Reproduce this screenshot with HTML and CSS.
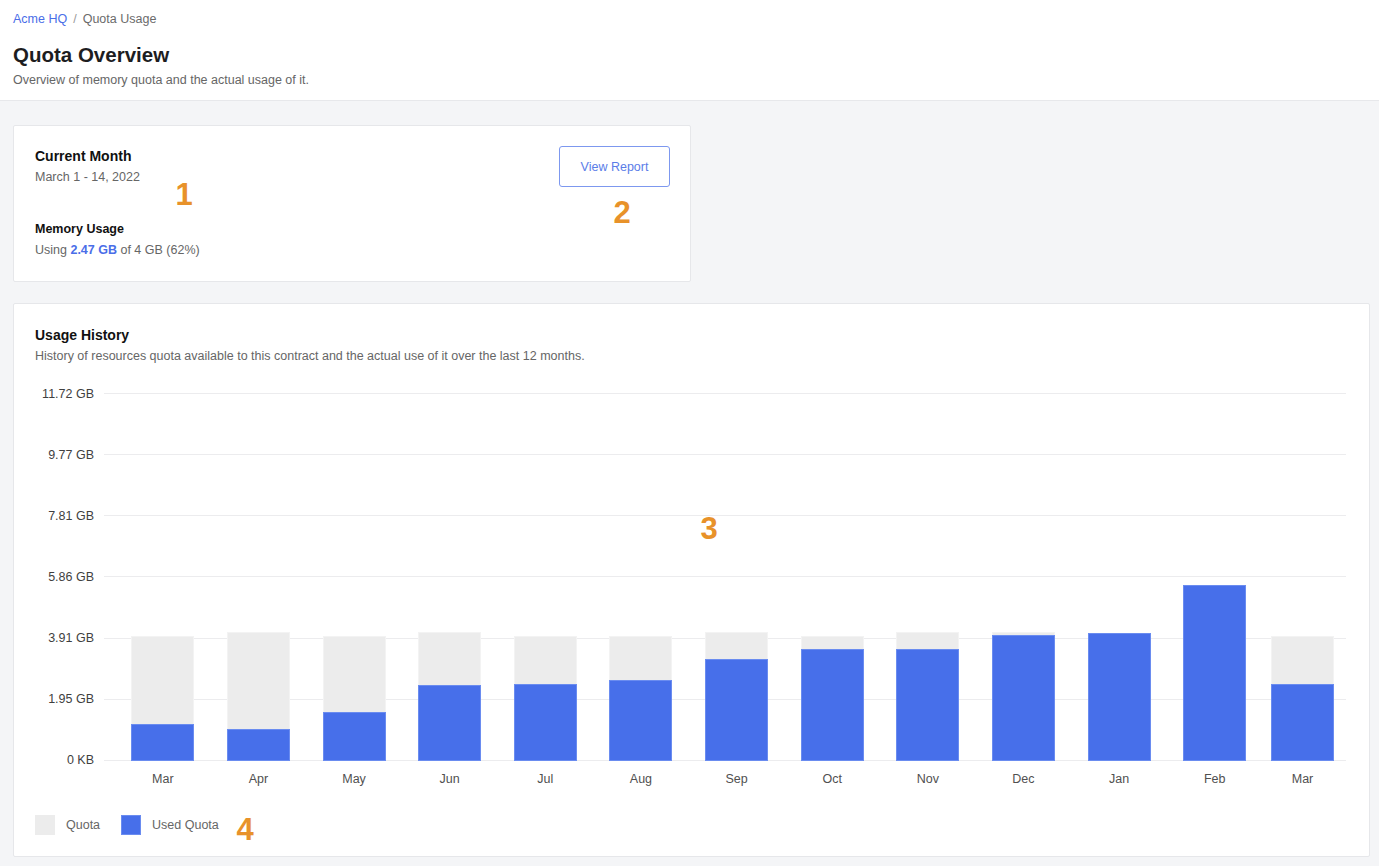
FILE: index.html
```html
<!DOCTYPE html>
<html lang="en">
<head>
<meta charset="utf-8">
<title>Quota Overview</title>
<link rel="stylesheet" href="styles.css">
</head>
<body>
<header class="page-header">
  <nav class="breadcrumb"><a class="crumb-link" href="#">Acme HQ</a><span class="crumb-sep">/</span><span class="crumb-current">Quota Usage</span></nav>
  <h1 class="page-title">Quota Overview</h1>
  <p class="page-subtitle">Overview of memory quota and the actual usage of it.</p>
</header>
<main class="page-main">
  <section class="card current-card">
    <div class="current-info">
      <h2 class="card-title">Current Month</h2>
      <p class="card-meta">March 1 - 14, 2022</p>
      <h3 class="usage-title">Memory Usage</h3>
      <p class="card-meta">Using <strong class="usage-value">2.47 GB</strong> of 4 GB (62%)</p>
    </div>
    <button class="btn-outline" type="button">View Report</button>
  </section>
  <section class="card history-card">
    <h2 class="card-title">Usage History</h2>
    <p class="card-meta">History of resources quota available to this contract and the actual use of it over the last 12 months.</p>
    <div class="chart">
      <div class="y-axis">
        <div class="y-label">11.72 GB</div>
        <div class="y-label">9.77 GB</div>
        <div class="y-label">7.81 GB</div>
        <div class="y-label">5.86 GB</div>
        <div class="y-label">3.91 GB</div>
        <div class="y-label">1.95 GB</div>
        <div class="y-label">0 KB</div>
      </div>
      <div class="plot">
        <div class="gridlines">
          <div class="gridline"></div><div class="gridline"></div><div class="gridline"></div><div class="gridline"></div><div class="gridline"></div><div class="gridline"></div><div class="gridline"></div>
        </div>
        <div class="bars">
          <div class="bar-col"><div class="bar-quota" style="height:34.0%"></div><div class="bar-used" style="height:10.1%"></div></div>
          <div class="bar-col"><div class="bar-quota" style="height:35.1%"></div><div class="bar-used" style="height:8.7%"></div></div>
          <div class="bar-col"><div class="bar-quota" style="height:34.0%"></div><div class="bar-used" style="height:13.3%"></div></div>
          <div class="bar-col"><div class="bar-quota" style="height:35.1%"></div><div class="bar-used" style="height:20.7%"></div></div>
          <div class="bar-col"><div class="bar-quota" style="height:34.0%"></div><div class="bar-used" style="height:20.9%"></div></div>
          <div class="bar-col"><div class="bar-quota" style="height:34.0%"></div><div class="bar-used" style="height:22.0%"></div></div>
          <div class="bar-col"><div class="bar-quota" style="height:35.1%"></div><div class="bar-used" style="height:27.7%"></div></div>
          <div class="bar-col"><div class="bar-quota" style="height:34.0%"></div><div class="bar-used" style="height:30.4%"></div></div>
          <div class="bar-col"><div class="bar-quota" style="height:35.1%"></div><div class="bar-used" style="height:30.4%"></div></div>
          <div class="bar-col"><div class="bar-quota" style="height:35.1%"></div><div class="bar-used" style="height:34.3%"></div></div>
          <div class="bar-col"><div class="bar-quota" style="height:34.0%"></div><div class="bar-used" style="height:34.8%"></div></div>
          <div class="bar-col"><div class="bar-quota" style="height:34.0%"></div><div class="bar-used" style="height:47.8%"></div></div>
          <div class="bar-col"><div class="bar-quota" style="height:34.0%"></div><div class="bar-used" style="height:20.9%"></div></div>
        </div>
      </div>
      <div class="x-axis">
        <span>Mar</span><span>Apr</span><span>May</span><span>Jun</span><span>Jul</span><span>Aug</span><span>Sep</span><span>Oct</span><span>Nov</span><span>Dec</span><span>Jan</span><span>Feb</span><span>Mar</span>
      </div>
    </div>
    <div class="legend">
      <div class="legend-item"><span class="swatch swatch-quota"></span><span>Quota</span></div>
      <div class="legend-item"><span class="swatch swatch-used"></span><span>Used Quota</span></div>
    </div>
  </section>
</main>
<div class="marker marker-1">1</div>
<div class="marker marker-2">2</div>
<div class="marker marker-3">3</div>
<div class="marker marker-4">4</div>
</body>
</html>
```

FILE: styles.css
```css
* { box-sizing: border-box; }

html, body {
  margin: 0;
  padding: 0;
}

body {
  position: relative;
  min-height: 866px;
  background: #f4f5f7;
  font-family: "Liberation Sans", Arial, Helvetica, sans-serif;
  color: #1f1f1f;
}

.page-header {
  background: #ffffff;
  border-bottom: 1px solid #e7e8eb;
  padding: 10px 13px 11px;
}

.breadcrumb {
  font-size: 12.5px;
  line-height: 18px;
  color: #6b6b6b;
}

.crumb-link {
  color: #4a6ee8;
  text-decoration: none;
}

.crumb-sep {
  color: #9a9a9a;
  margin: 0 6px;
}

.page-title {
  margin: 14px 0 0;
  font-size: 20.5px;
  line-height: 26px;
  font-weight: 700;
  color: #1d1d1f;
}

.page-subtitle {
  margin: 3px 0 0;
  font-size: 12.5px;
  line-height: 18px;
  color: #666666;
}

.page-main {
  padding: 24px 9px 10px 13px;
  display: flex;
  flex-direction: column;
  align-items: flex-start;
  gap: 21px;
}

.card {
  background: #ffffff;
  border: 1px solid #e6e7ea;
  border-radius: 2px;
  padding: 20px 21px 21px;
}

.current-card {
  width: 678px;
  padding-right: 20px;
  display: flex;
  justify-content: space-between;
  align-items: flex-start;
}

.history-card {
  width: 100%;
  padding: 21px 23px 21px 21px;
}

.card-title {
  margin: 0;
  font-size: 14px;
  line-height: 20px;
  font-weight: 700;
  color: #111111;
}

.card-meta {
  margin: 1px 0 0;
  font-size: 12.5px;
  line-height: 20px;
  color: #666666;
}

.usage-title {
  margin: 32px 0 0;
  font-size: 12.5px;
  line-height: 20px;
  font-weight: 700;
  color: #111111;
}

.usage-value {
  color: #4a6ee8;
  font-weight: 700;
}

.btn-outline {
  width: 111px;
  height: 41px;
  background: #ffffff;
  border: 1px solid #7d98ef;
  border-radius: 3px;
  color: #5b7de8;
  font-family: inherit;
  font-size: 12.5px;
  cursor: pointer;
}

/* Chart */
.chart {
  margin-top: 27px;
  display: grid;
  grid-template-columns: 59px 1fr;
  column-gap: 10px;
}

.y-axis {
  height: 368px;
  display: flex;
  flex-direction: column;
  justify-content: space-between;
}

.y-label {
  height: 1px;
  display: flex;
  align-items: center;
  justify-content: flex-end;
  font-size: 12.5px;
  line-height: 16px;
  color: #3f3f3f;
  white-space: nowrap;
}

.plot {
  height: 368px;
  display: grid;
}

.gridlines,
.bars {
  grid-area: 1 / 1;
}

.gridlines {
  display: flex;
  flex-direction: column;
  justify-content: space-between;
}

.gridline {
  height: 1px;
  background: #ececee;
}

.bars,
.x-axis {
  display: grid;
  grid-template-columns: repeat(12, 95.64px) 80px;
  padding-left: 11px;
}

.bar-col {
  display: grid;
  justify-items: center;
  align-items: end;
}

.bar-quota,
.bar-used {
  grid-area: 1 / 1;
  width: 63px;
}

.bar-quota {
  background: #ececec;
  border: 1px solid #f3f3f3;
}

.bar-used {
  background: #476fea;
  border: 1px solid #6a8cf0;
}

.x-axis {
  grid-column: 2;
  margin-top: 10px;
  font-size: 12.5px;
  line-height: 16px;
  color: #505050;
  text-align: center;
}

.legend {
  margin-top: 28px;
  display: flex;
  gap: 21px;
  font-size: 12.5px;
  line-height: 20px;
  color: #666666;
}

.legend-item {
  display: flex;
  align-items: center;
  gap: 11px;
}

.swatch {
  width: 20px;
  height: 20px;
  display: block;
}

.swatch-quota { background: #ececec; }
.swatch-used { background: #476fea; border: 1px solid #6a8cf0; }

/* Annotation markers overlaying the screenshot */
.marker {
  position: absolute;
  width: 40px;
  text-align: center;
  font-size: 31px;
  line-height: 31px;
  font-weight: 700;
  color: #e8922a;
}

.marker-1 { left: 164px; top: 179px; }
.marker-2 { left: 602px; top: 197px; }
.marker-3 { left: 689px; top: 513px; }
.marker-4 { left: 225px; top: 814px; }
```
